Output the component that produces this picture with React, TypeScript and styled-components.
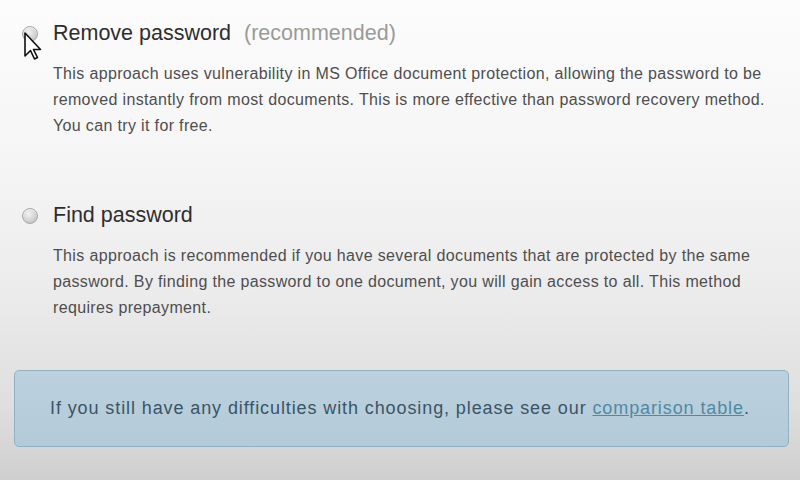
import React from "react";
import styled, { createGlobalStyle } from "styled-components";

const Global = createGlobalStyle`
  html, body { margin: 0; padding: 0; }
  body { font-family: "Liberation Sans", Arial, sans-serif; }
`;

const Page = styled.div`
  position: relative;
  width: 800px;
  height: 480px;
  box-sizing: border-box;
  overflow: hidden;
  padding: 20px 11px 0 14px;
  background: linear-gradient(180deg, #fcfcfc 0%, #f6f6f6 30%, #ececec 60%, #dedede 85%, #cfcfcf 100%);
  display: flex;
  flex-direction: column;
`;

const Option = styled.div<{ $gap: number }>`
  display: grid;
  grid-template-columns: 16px 1fr;
  column-gap: 15px;
  padding-left: 8px;
  margin-bottom: ${(p) => p.$gap}px;
`;

const Radio = styled.span`
  width: 14px;
  height: 14px;
  margin-top: 6px;
  border-radius: 50%;
  border: 1px solid #a9a9a9;
  background: radial-gradient(circle at 40% 35%, #f2f2f2 0%, #d2d2d2 55%, #b9b9b9 100%);
  box-shadow: inset 0 1px 1px rgba(255, 255, 255, 0.7);
`;

const Title = styled.div`
  font-size: 21.5px;
  line-height: 26px;
  color: #2e2e2e;
`;

const Note = styled.span`
  color: #9a9a9a;
  margin-left: 13px;
`;

const Desc = styled.p`
  grid-column: 2;
  margin: 15px 0 0;
  font-size: 16px;
  letter-spacing: 0.35px;
  line-height: 26px;
  color: #4e4e4e;
  white-space: nowrap;
`;

const InfoBox = styled.div`
  height: 77px;
  box-sizing: border-box;
  border: 1px solid #8fb1c3;
  border-radius: 5px;
  background: linear-gradient(180deg, #bcd1de 0%, #b3cad8 100%);
  display: flex;
  align-items: center;
  padding-left: 35px;
  font-size: 18px;
  letter-spacing: 0.9px;
  color: #3a5567;
  white-space: nowrap;
`;

const Link = styled.a`
  color: #4f8aa5;
  text-decoration: underline;
`;

const Cursor = styled.svg`
  position: absolute;
  left: 23px;
  top: 32px;
`;

export default function App() {
  return (
    <Page>
      <Global />
      <Option $gap={63}>
        <Radio />
        <Title>
          Remove password<Note>(recommended)</Note>
        </Title>
        <Desc>
          This approach uses vulnerability in MS Office document protection, allowing the password to be
          <br />
          removed instantly from most documents. This is more effective than password recovery method.
          <br />
          You can try it for free.
        </Desc>
      </Option>
      <Option $gap={49}>
        <Radio />
        <Title>Find password</Title>
        <Desc>
          This approach is recommended if you have several documents that are protected by the same
          <br />
          password. By finding the password to one document, you will gain access to all. This method
          <br />
          requires prepayment.
        </Desc>
      </Option>
      <InfoBox>
        <span>
          If you still have any difficulties with choosing, please see our{" "}
          <Link href="#">comparison table</Link>.
        </span>
      </InfoBox>
      <Cursor width="20" height="32" viewBox="0 0 20 32">
        <path d="M2 1 L2 24 L7.5 18.5 L11.5 27 L14.5 25.5 L10.5 17.5 L17.5 17.5 Z" fill="#fff" stroke="#111" strokeWidth="1.6" strokeLinejoin="round" />
      </Cursor>
    </Page>
  );
}
